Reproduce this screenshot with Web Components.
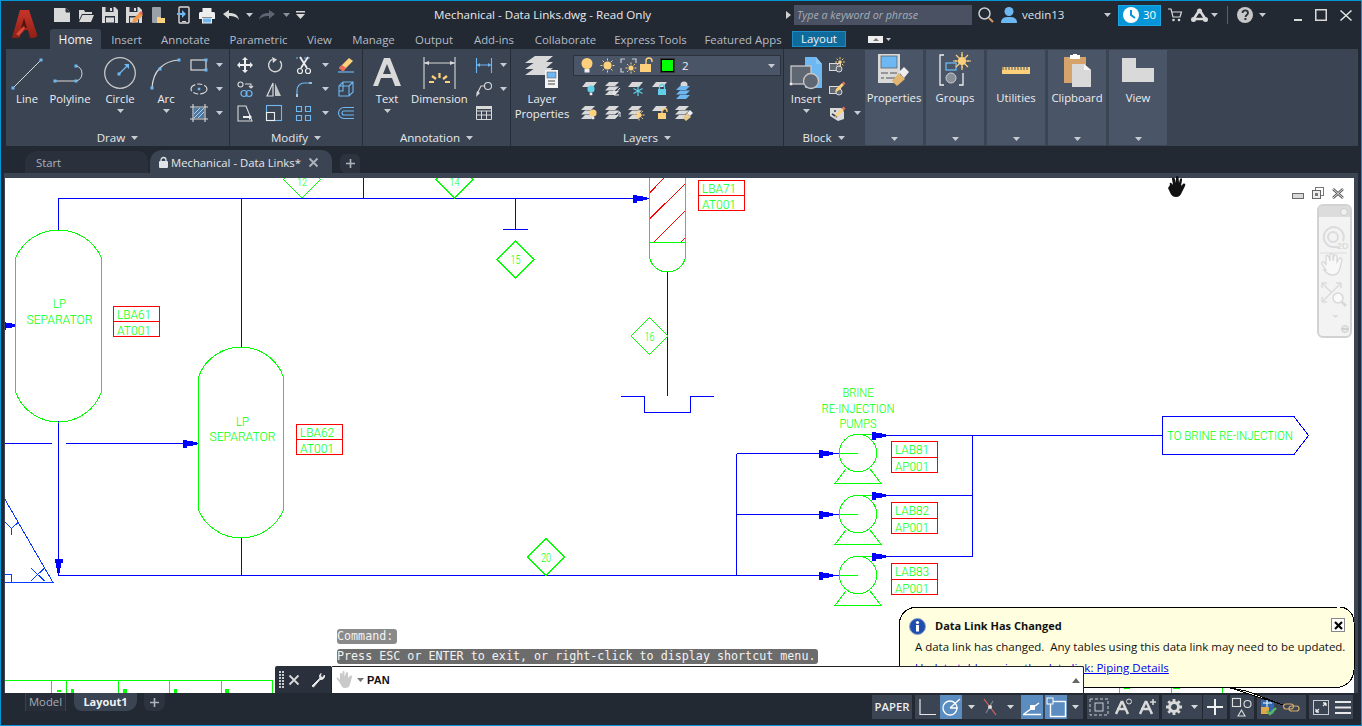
<!DOCTYPE html>
<html lang="en"><head><meta charset="utf-8"><title>Mechanical - Data Links</title>
<style>html,body{margin:0;padding:0;background:#222933;overflow:hidden}</style></head>
<body>
<cad-app>
 <cad-titlebar slot="title"></cad-titlebar>
 <cad-tabs slot="tabs"></cad-tabs>
 <cad-ribbon slot="ribbon">
  <cad-panel name="Draw" w="224">
   <cad-tool label="Line" w="42" icon="line"></cad-tool>
   <cad-tool label="Polyline" w="44" icon="polyline"></cad-tool>
   <cad-tool label="Circle" w="56" icon="circle" caret></cad-tool>
   <cad-tool label="Arc" w="36" icon="arc" caret></cad-tool>
   <cad-minis cols="34px" left="2">
    <cad-mini icon="rect" w="26" dd></cad-mini><cad-mini icon="ell" w="26" dd></cad-mini><cad-mini icon="hatch" w="26" dd></cad-mini>
   </cad-minis>
  </cad-panel>
  <cad-panel name="Modify" w="133">
   <cad-minis cols="29px 30px 42px 30px" flowrow>
    <cad-mini icon="move" w="29"></cad-mini><cad-mini icon="rot" w="30"></cad-mini><cad-mini icon="trim" w="29" dd></cad-mini><cad-mini icon="erase" w="30"></cad-mini>
    <cad-mini icon="copy" w="29"></cad-mini><cad-mini icon="mirror" w="30"></cad-mini><cad-mini icon="fillet" w="29" dd></cad-mini><cad-mini icon="cube" w="30"></cad-mini>
    <cad-mini icon="stretch" w="29"></cad-mini><cad-mini icon="scale" w="30"></cad-mini><cad-mini icon="array" w="29" dd></cad-mini><cad-mini icon="offset" w="30"></cad-mini>
   </cad-minis>
  </cad-panel>
  <cad-panel name="Annotation" w="148">
   <cad-tool label="Text" w="48" icon="bigA" caret></cad-tool>
   <cad-tool label="Dimension" w="56" icon="dim"></cad-tool>
   <cad-minis cols="42px">
    <cad-mini icon="lindim" w="33" dd gap="0"></cad-mini><cad-mini icon="leader" w="33" dd gap="0"></cad-mini><cad-mini icon="table" w="33"></cad-mini>
   </cad-minis>
  </cad-panel>
  <cad-panel name="Layers" w="273">
   <cad-tool label="Layer Properties" w="62" icon="layerprops"></cad-tool>
   <cad-layers></cad-layers>
  </cad-panel>
  <cad-panel name="Block" w="79" end>
   <cad-tool label="Insert" w="44" icon="insert" caret></cad-tool>
   <cad-minis cols="34px">
    <cad-mini icon="bcreate" w="18"></cad-mini><cad-mini icon="bedit" w="18"></cad-mini><cad-mini icon="battr" w="18" dd gap="8"></cad-mini>
   </cad-minis>
  </cad-panel>
  <cad-slate label="Properties" icon="props" gap="2"></cad-slate>
  <cad-slate label="Groups" icon="groups" gap="3"></cad-slate>
  <cad-slate label="Utilities" icon="ruler" gap="3"></cad-slate>
  <cad-slate label="Clipboard" icon="clip" gap="3"></cad-slate>
  <cad-slate label="View" icon="viewic" gap="3"></cad-slate>
 </cad-ribbon>
 <cad-doctabs slot="docs"></cad-doctabs>
 <cad-viewport slot="view">
  <cad-drawing></cad-drawing>
  <cad-hand slot="over"></cad-hand>
  <cad-vpctl slot="over"></cad-vpctl>
  <cad-nav slot="over"></cad-nav>
  <cad-history slot="over"></cad-history>
  <cad-balloon slot="over"></cad-balloon>
  <cad-command slot="over"></cad-command>
 </cad-viewport>
 <cad-status slot="status"></cad-status>
</cad-app>
<script>
const g='#d9d9d9',b='#6db8f2',y='#fdd17b',bd='#5aa5e6';
const S=(w,h,body)=>`<svg width="${w}" height="${h}" viewBox="0 0 ${w} ${h}" style="display:block;flex:none;overflow:visible" aria-hidden="true">${body}</svg>`;
const sq=(x,y,s=3,c=b)=>`<rect x="${x-s/2}" y="${y-s/2}" width="${s}" height="${s}" fill="${c}"/>`;
const tri=(c='#c8ccd2',w=7,h=4)=>S(w,h,`<path d="M0 0H${w}L${w/2} ${h}z" fill="${c}"/>`);
const plane=(x,y)=>`<path d="M${x+4} ${y}h11l-4 5H${x}z" fill="${g}"/>`;
const stack=(x,y,c=g)=>`<path d="M${x+4} ${y}h10l-4 4H${x}z M${x+4} ${y+4.5}h10l-4 4H${x}z M${x+4} ${y+9}h10l-4 4H${x}z" fill="${c}"/>`;
const bulb=(x,yy,c)=>`<circle cx="${x}" cy="${yy}" r="3.6" fill="${c}"/><rect x="${x-1.3}" y="${yy+3.6}" width="2.6" height="2.6" fill="#eee"/>`;
const sun=(x,yy,r=3,c='#fdd17b')=>{let s=`<circle cx="${x}" cy="${yy}" r="${r}" fill="${c}"/>`;for(let i=0;i<8;i++){const a=i*Math.PI/4;s+=`<line x1="${x+Math.cos(a)*(r+1)}" y1="${yy+Math.sin(a)*(r+1)}" x2="${x+Math.cos(a)*(r+3)}" y2="${yy+Math.sin(a)*(r+3)}" stroke="${c}" stroke-width="1"/>`}return s};
const lock=(x,yy,c,open)=>`<rect x="${x}" y="${yy+4}" width="8" height="6" fill="${c}"/><path d="M${x+(open?4:1.5)} ${yy+4}V${yy+2}a2.5 2.5 0 0 1 5 0${open?'v1':'V'+(yy+4)}" fill="none" stroke="${c}" stroke-width="1.3"/>`;
const floppy=`<path d="M0 0h13l3 3v13H0z" fill="${g}"/><rect x="3.5" y="0" width="8" height="5" fill="#2a313d"/><rect x="8" y="1" width="2" height="3" fill="${g}"/><rect x="3" y="9" width="10" height="7" fill="#2a313d"/><rect x="4" y="10.5" width="8" height="5" fill="${g}"/>`;
const I={
 logo:S(26,29,`<defs><linearGradient id="lg" x1="0" y1="0" x2="0" y2="1"><stop offset="0" stop-color="#c9342a"/><stop offset="1" stop-color="#8e1f16"/></linearGradient></defs><path d="M8 0h9l8.500 26-3.500 2h-4l-2-8h-3l-5 5 .5 2-4 1H0z" fill="url(#lg)"/><path d="M12 8l3 10h-6z" fill="#54150f"/><path d="M4 24l8-8 1 2-6 8z" fill="#d8493a"/>`),
 new:S(16,14,`<path d="M0 0h12l4 4v10H0z" fill="${g}"/><path d="M12 0v4h4" fill="#2a313d" stroke="#2a313d"/>`),
 open:S(16,13,`<path d="M1 1h5l1 2h7v2H4L1 11z" fill="${g}"/><path d="M4.500 6H16l-3 7H1z" fill="${g}"/>`),
 save:S(16,16,floppy),
 saveas:S(17,16,floppy+`<path d="M7 12l7-7 3 3-7 7-4 1z" fill="#f09a4a"/><path d="M13 6l2-2 2 2-2 2z" fill="#ef6b5b"/>`),
 web1:S(13,16,`<rect width="9" height="16" rx="1" fill="#9aa0a8"/><path d="M5 10h3l1 1h4v5H5z" fill="${y}"/>`),
 web2:S(12,16,`<rect x="2" width="10" height="16" rx="1" fill="none" stroke="${g}" stroke-width="1.400"/><rect x="5" y="14" width="4" height="1" fill="${g}"/><path d="M0 6h5V3l4 4-4 4V8H0z" fill="${b}"/>`),
 print:S(16,15,`<rect x="3.500" y="0" width="9" height="4" fill="#eee"/><path d="M1 4h14l1 1v6h-3v-2H3v2H0V5z" fill="#eee"/><rect x="3.500" y="10" width="9" height="5" fill="${b}" stroke="#eee"/>`),
 undo:S(16,10,`<path d="M0 4 6 0v3c5 0 9 1 10 7-2-3-5-4-10-4v3z" fill="${g}"/>`),
 redo:S(16,10,`<path d="M16 4 10 0v3c-5 0-9 1-10 7 2-3 5-4 10-4v3z" fill="#5d6672"/>`),
 menu:S(9,8,`<rect width="9" height="1.500" fill="${g}"/><path d="M0 3h9L4.500 8z" fill="${g}"/>`),
 search:S(16,16,`<circle cx="6.500" cy="6.500" r="5.500" fill="none" stroke="#c9ccd1" stroke-width="1.500"/><path d="M11 11l4 4" stroke="#d79a62" stroke-width="2"/>`),
 user:S(16,16,`<circle cx="8" cy="4.500" r="4.500" fill="${b}"/><path d="M0 16c0-5 3-6 8-6s8 1 8 6z" fill="${b}"/>`),
 clock:S(16,16,`<circle cx="8" cy="8" r="8" fill="#fff"/><path d="M8 3v5l4 3" fill="none" stroke="#0696d7" stroke-width="2"/>`),
 cart:S(14,14,`<path d="M0 1h3l2 8h7l1.500-5H4" fill="none" stroke="${g}" stroke-width="1.200"/><circle cx="5.500" cy="12" r="1.300" fill="${g}"/><circle cx="11" cy="12" r="1.300" fill="${g}"/>`),
 a360:S(17,14,`<path d="M8.500 2L2 12M8.500 2L15 12M3 11h11" stroke="${g}" stroke-width="2.500" fill="none"/><circle cx="8.500" cy="3" r="2.500" fill="${g}"/><circle cx="2.500" cy="11.500" r="2.500" fill="${g}"/><circle cx="14.500" cy="11.500" r="2.500" fill="${g}"/>`),
 help:`<svg width="16" height="16" viewBox="0 0 16 16" style="display:block"><circle cx="8" cy="8" r="8" fill="#c8c8c8"/><path d="M5.500 6c0-3.500 5.500-3.500 5.500 0 0 2-2.500 2-2.500 4" fill="none" stroke="#2a313d" stroke-width="1.800"/><rect x="7.400" y="11" width="2" height="2" fill="#2a313d"/></svg>`,
 line:S(32,32,`<line x1="2" y1="31" x2="30" y2="3" stroke="${g}"/>`+sq(2,31)+sq(30,3)),
 polyline:S(32,32,`<path d="M1 24H22A7.700 7.700 0 0 0 22 9" fill="none" stroke="${g}"/>`+sq(1,24)+sq(22,24)+sq(22,9)),
 circle:S(32,32,`<circle cx="16" cy="16" r="15.300" fill="none" stroke="#c8c8c8" stroke-width="1.300"/><path d="M15 17L24 8" stroke="${b}" stroke-width="1.300"/><path d="M20 7h5v5z" fill="${b}"/>`+sq(15,17,3)),
 arc:S(32,32,`<path d="M2 31C3 14 13 4 29 3" fill="none" stroke="${g}" stroke-width="1.200"/>`+sq(2,31)+sq(10,12)+sq(29,3)),
 rect:S(18,14,`<rect x="1" y="2" width="15" height="10" fill="none" stroke="${g}" stroke-width="1.200"/>`+sq(16,2)+sq(16,12)),
 ell:S(18,12,`<ellipse cx="9" cy="6" rx="8" ry="5" fill="none" stroke="${g}" stroke-width="1.200" stroke-dasharray="9 2 5 2"/>`+sq(9,6,2.500)),
 hatch:S(18,18,`<path d="M3 0v18M15 0v18M0 3h18M0 15h18" stroke="${g}" stroke-width="1.100"/><rect x="4" y="4" width="10" height="10" fill="${bd}" opacity=".55"/><path d="M4 10l6-6M4 14l10-10M8 14l6-6" stroke="#cde5fa" stroke-width=".8"/>`),
 move:S(16,16,`<path d="M8 0l3 3H9v4h4V5l3 3-3 3V9H9v4h2l-3 3-3-3h2V9H3v2L0 8l3-3v2h4V3H5z" fill="#f0f0f0"/>`),
 rot:S(16,16,`<path d="M6 2.500A6.500 6.500 0 1 0 14 4" fill="none" stroke="${g}" stroke-width="1.400"/><path d="M6 0l5 2.500L7 6z" fill="${g}"/>`),
 trim:S(16,17,`<path d="M0 1h16" stroke="${b}" stroke-dasharray="2 2" stroke-width="1.200"/><path d="M4 0l7 11M12 0L5 11" stroke="#eee" stroke-width="1.800"/><circle cx="4" cy="14" r="2.500" fill="none" stroke="#eee" stroke-width="1.200"/><circle cx="12" cy="14" r="2.500" fill="none" stroke="#eee" stroke-width="1.200"/>`),
 erase:S(16,16,`<path d="M0 15h16" stroke="${b}" stroke-width="1.200"/><path d="M1 11l10-10 4 3-9 9H4z" fill="${y}"/><path d="M1 11l3-3 4 3-2 3H4z" fill="#ef6b5b"/>`),
 copy:S(16,16,`<circle cx="3.500" cy="3.500" r="2.500" fill="none" stroke="${g}" stroke-width="1.100"/><path d="M8 3h6v3M12 5l2 2 2-2" fill="none" stroke="${g}" stroke-width="1.100"/><circle cx="7" cy="12.500" r="3" fill="none" stroke="${b}" stroke-width="1.200"/><circle cx="12" cy="12.500" r="3" fill="none" stroke="${b}" stroke-width="1.200"/>`),
 mirror:S(15,15,`<path d="M6 1v13H0z" fill="none" stroke="${g}" stroke-width="1.200"/><path d="M8 1v13h6z" fill="${g}" opacity=".85"/>`),
 fillet:S(16,16,`<path d="M1 16V9a7 7 0 0 1 7-7h8" fill="none" stroke="${b}" stroke-width="1.200"/><path d="M1 16v-3M13 2h3" stroke="#eee" stroke-width="1.200"/>`),
 cube:S(16,16,`<path d="M5 1h10v10l-4 4H1V5zM1 5h10v10M11 5l4-4M5 1v9H1" fill="none" stroke="${b}" stroke-width="1.100"/>`),
 stretch:S(16,16,`<path d="M1 1h8l6 15H1z" fill="none" stroke="${g}" stroke-width="1.100"/><path d="M6 11h6V9l3 3-3 3v-2H6z" fill="#eee"/>`),
 scale:S(16,16,`<rect x=".5" y=".5" width="15" height="15" fill="none" stroke="${b}" stroke-width="1.100"/><rect x=".5" y="7.500" width="8" height="8" fill="none" stroke="#eee" stroke-width="1.100"/>`),
 array:S(15,15,`<path d="M.5.5h5v5h-5zM9.500.5h5v5h-5zM.5 9.500h5v5h-5zM9.500 9.500h5v5h-5z" fill="none" stroke="${b}" stroke-width="1.100"/>`),
 offset:S(16,12,`<path d="M16 .5H6a5.500 5.500 0 0 0 0 11h10M16 4H6a2 2 0 0 0 0 4h10" fill="none" stroke="${b}" stroke-width="1.100"/>`),
 bigA:S(28,30,`<path d="M11 0h6l11 28h-6l-3-8H8l-3 8H0zM14 6l-4 10h8z" fill="${g}" fill-rule="evenodd"/>`),
 dim:S(33,32,`<path d="M1 0v32M32 0v32" stroke="${g}" stroke-width="1.100"/><path d="M1 6h31" stroke="${g}"/><path d="M1 6l5-2v4zM32 6l-5-2v4z" fill="${g}"/><g stroke="${y}" stroke-width="2.200"><path d="M16.500 16v5M9 19l4 3M24 19l-4 3M6 25h5M27 25h-5"/></g>`),
 lindim:S(16,15,`<path d="M.5 0v15M15.500 0v15M1 7h14" stroke="${b}" stroke-width="1.100"/><path d="M1 7l3-2v4zM15 7l-3-2v4z" fill="${b}"/>`),
 leader:S(16,15,`<circle cx="12" cy="4" r="3.500" fill="none" stroke="${g}" stroke-width="1.100"/><path d="M8.500 4H5L1 12" fill="none" stroke="${g}" stroke-width="1.100"/><path d="M0 15l1-6 3 2z" fill="${g}"/>`),
 table:S(16,14,`<path d="M.5.5h15v13H.5zM.5 5h15M.5 9h15M5.500 5v8.500M10.500 5v8.500" fill="none" stroke="${g}" stroke-width="1"/><rect x="0" y="0" width="16" height="3" fill="${g}"/>`),
 layerprops:S(34,34,`<path d="M10 0h18l-8 7H0z M10 6h18l-8 7H0z M10 12h18l-8 7H0z" fill="${g}"/><rect x="20" y="14" width="13" height="18" fill="#f4f4f4"/><rect x="22" y="16" width="9" height="6" fill="${b}" stroke="#555" stroke-width=".5"/><path d="M23 25h7M30 28h-7" stroke="#444"/>`),
 insert:S(32,32,`<path d="M15 0h11l6 7v24H15z" fill="${b}"/><path d="M26 0v7h6" fill="#8ac6f4"/><rect x="1" y="9" width="20" height="18" fill="#5e6772" stroke="#c8c8c8" stroke-width="1.300"/><circle cx="21" cy="24" r="7.500" fill="#5e6772" stroke="#c8c8c8" stroke-width="1.300"/>`+sq(1,27,2.500,'#eee')),
 bcreate:S(16,15,`<rect x=".5" y="5.500" width="11" height="7" fill="#5e6772" stroke="${g}"/><circle cx="10" cy="11" r="3" fill="#5e6772" stroke="${g}"/>`+sun(11,4,1.800)),
 bedit:S(16,16,`<rect x=".5" y="5.500" width="11" height="7" fill="#5e6772" stroke="${g}"/><circle cx="10" cy="11" r="3" fill="#5e6772" stroke="${g}"/><path d="M7 8l6-6 2 2-6 6-3 1z" fill="${y}"/><path d="M13 2l1.500-1.500 2 2L15 4z" fill="#ef6b5b"/>`),
 battr:S(16,16,`<path d="M1 3h11l3 4v7l-6 2-8-5z" fill="${g}"/><path d="M5 6h2M3 9l5 3" stroke="#39424f" stroke-width="1.500"/><path d="M7 9l6-6 2 2-6 6-3 1z" fill="${y}"/><path d="M13 3l1.500-1.500 2 2L15 5z" fill="#ef6b5b"/>`),
 props:S(32,33,`<rect x="0" y="0" width="22" height="29" fill="${g}"/><rect x="3" y="2" width="16" height="12" fill="${b}" stroke="#555" stroke-width=".7"/><path d="M3 19h7M12 19h7M3 24h3M8 24h11" stroke="#555"/><path d="M14 27l7-8 6 6-8 7z" fill="#e3b56e"/><path d="M21 18l5-5 5 5-5 6z" fill="#eee"/>`),
 groups:S(32,32,`<path d="M5 1H1v30h4M20 31h4V19" fill="none" stroke="#eee" stroke-width="1.300"/><rect x="7" y="9" width="10" height="7" fill="none" stroke="${b}" stroke-width="1.300"/><circle cx="12" cy="24" r="5" fill="#8a9099" stroke="#ccc"/><g transform="translate(-2 -3)">${sun(25,10,4,y)}<path d="M25 1v18M16 10h18M19 4l12 12M31 4L19 16" stroke="${y}" stroke-width="1.200"/></g>`),
 ruler:S(28,7,`<rect width="28" height="7" y="0" fill="${y}"/><path d="M1 0v3M4 0v3M7 0v3M10 0v3M13 0v3M16 0v3M19 0v3M22 0v3M25 0v3" stroke="#4a5568"/>`),
 clip:S(27,32,`<rect x="0" y="3" width="22" height="26" fill="#d6a36b"/><rect x="6" y="1" width="10" height="4" fill="#fff"/><rect x="9" y="0" width="4" height="3" fill="#fff"/><path d="M8 10h12l7 6v17H8z" fill="${g}"/><path d="M20 10v6h7" fill="#f5f5f5"/>`),
 viewic:S(32,24,`<path d="M0 0h14v10h18v14H0z" fill="${g}"/>`),
};
const def=(n,c)=>customElements.define(n,c);
class Base extends HTMLElement{constructor(){super();this.attachShadow({mode:'open'})}connectedCallback(){if(!this.done){this.done=1;this.shadowRoot.innerHTML=this.html()}}}
const FONT=`"Open Sans","Noto Sans","Liberation Sans",sans-serif`;

def('cad-app',class extends Base{html(){return `<style>:host{display:flex;flex-direction:column;box-sizing:border-box;width:1362px;height:726px;background:#222933;border:1px solid #0696d7;font:11.300px/14px ${FONT};color:#e6e8ea;overflow:hidden}</style>
<slot name="title"></slot><slot name="tabs"></slot><slot name="ribbon"></slot><slot name="docs"></slot><slot name="view"></slot><slot name="status"></slot>`}});

def('cad-titlebar',class extends Base{html(){
 const it=(ml,s,st='')=>`<span style="margin-left:${ml}px;flex:none;${st}">${s}</span>`;
 return `<style>:host{display:flex;align-items:center;height:28px;flex:none}
 .t{font-size:11.600px;color:#e8eaec;white-space:nowrap;width:341px;flex:none}
 .s{margin-left:3px;width:178px;height:20px;flex:none;background:#495163;color:#a7adb6;font-style:italic;font-size:10.700px;line-height:20px;padding-left:3px;box-sizing:border-box;white-space:nowrap}
 .u{margin-left:5px;width:81px;flex:none;font-size:11.500px;color:#dfe3e6}
 .c{margin-left:7px;width:43px;height:21px;flex:none;box-sizing:border-box;background:#0696d7;border:1px solid #1aa5e5;display:flex;align-items:center;padding-left:4px;gap:4px;color:#fff;font-size:11.500px}
 span{display:block}</style>
 ${it(11,I.logo,'align-self:flex-start;margin-top:9px;height:0')}
 ${it(16,I.new)}${it(8,I.open)}${it(8,I.save)}${it(8,I.saveas)}${it(9,I.web1)}${it(12,I.web2)}${it(10,I.print)}${it(8,I.undo)}${it(7,tri())}${it(6,I.redo)}${it(8,tri('#8a919b'))}${it(6,I.menu)}
 <span class="t" style="margin-left:129px">Mechanical - Data Links.dwg - Read Only</span>
 ${it(11,S(5,8,`<path d="M0 0l5 4-5 4z" fill="#d0d0d0"/>`))}
 <div class="s">Type a keyword or phrase</div>
 ${it(6,I.search)}${it(7,I.user)}
 <span class="u">vedin13</span>${it(1,tri())}
 <div class="c">${I.clock}<span>30</span></div>
 ${it(7,I.cart)}${it(9,I.a360)}${it(3,tri())}
 ${it(9,`<div style="width:1px;height:18px;background:#59616d"></div>`)}${it(9,I.help)}${it(6,tri())}
 ${it(28,S(8,2,`<rect width="8" height="2" fill="#d9d9d9"/>`),'margin-top:10px')}
 ${it(13,S(12,12,`<rect x=".75" y=".75" width="10.500" height="10.500" fill="none" stroke="#d9d9d9" stroke-width="1.500"/>`))}
 ${it(13,S(12,11,`<path d="M.5.5l11 10M11.500.5l-11 10" stroke="#e6e6e6" stroke-width="1.500"/>`))}`}});

def('cad-tabs',class extends Base{html(){
 const t=[['Home',51,1],['Insert',51],['Annotate',67],['Parametric',79],['View',43],['Manage',65],['Output',56],['Add-ins',64],['Collaborate',79],['Express Tools',91],['Featured Apps',94]];
 return `<style>:host{display:flex;height:20px;flex:none;padding-left:49px;align-items:flex-start}
 div{text-align:center;line-height:18px;padding-top:2px;height:18px;color:#b4bcc6;white-space:nowrap;font-size:11.400px;flex:none}
 .a{background:#3b4453;color:#f2f4f6;border-radius:3px 3px 0 0;font-size:12px}
 .l{margin-left:2px;margin-top:2px;width:54px;height:16px;box-sizing:border-box;line-height:14px;padding:0;background:#0f6b9c;border:1px solid #1c8cc6;color:#f2f4f6}
 .b{margin-left:22px;margin-top:7px;width:15px;height:7px;padding:0;background:#eee;display:flex;align-items:center;justify-content:center}
 .d{margin-left:3px;margin-top:9px;padding:0;height:auto}</style>
 ${t.map(x=>`<div class="${x[2]?'a':''}" style="width:${x[1]}px">${x[0]}</div>`).join('')}
 <div class="l">Layout</div><div class="b">${S(6,3,`<path d="M0 3h6L3 0z" fill="#777"/>`)}</div><div class="d">${tri('#c8ccd2',5,3)}</div>`}});

def('cad-ribbon',class extends Base{html(){return `<style>:host{display:flex;height:97px;flex:none;margin-left:5px;margin-right:3px;background:#3b4453}</style><slot></slot>`}});

def('cad-panel',class extends Base{html(){const w=this.getAttribute('w');return `<style>:host{display:flex;flex-direction:column;flex:none;box-sizing:border-box;width:${w}px;height:97px;${this.hasAttribute('end')?'':'border-right:1px solid #262d38;'}}
 .c{display:flex;height:80px;padding-top:4px;box-sizing:border-box}
 .n{height:17px;line-height:15px;display:flex;align-items:center;justify-content:center;gap:6px;color:#e6e8ea;font-size:11.600px}</style>
 <div class="c"><slot></slot></div><div class="n"><span>${this.getAttribute('name')}</span>${tri()}</div>`}});

def('cad-tool',class extends Base{html(){const a=k=>this.getAttribute(k);return `<style>:host{display:flex;flex-direction:column;align-items:center;width:${a('w')}px;flex:none;color:#eceef0;font-size:11.300px;line-height:15px;text-align:center}
 .i{height:39px;display:flex;align-items:center;justify-content:center}
 .l{white-space:normal;width:100%;margin-top:-1px}.c{margin-top:3px}</style>
 <div class="i">${I[a('icon')]}</div><div class="l">${a('label').replace(' ','<br>')}</div>${this.hasAttribute('caret')?`<div class="c">${tri('#c8ccd2')}</div>`:''}`}});

def('cad-minis',class extends Base{html(){const a=k=>this.getAttribute(k);return `<style>:host{display:grid;grid-template-columns:${a('cols')};grid-auto-rows:24px;align-items:center;flex:none;margin-left:${a('left')||0}px}</style><slot></slot>`}});

def('cad-mini',class extends Base{html(){const a=k=>this.getAttribute(k);return `<style>:host{display:flex;align-items:center}.i{width:${a('w')}px;display:flex;justify-content:center;flex:none}.d{margin-left:${a('gap')||4}px}</style>
 <div class="i">${I[a('icon')]}</div>${this.hasAttribute('dd')?`<div class="d">${tri()}</div>`:''}`}});

def('cad-layers',class extends Base{html(){
 const r1=[S(16,15,plane(0,0)+bulb(9,7,'#5fd0e8')),S(16,15,stack(0,0)+`<path d="M15 6L9 13M9 8v5h5" fill="none" stroke="#eee"/>`),S(17,15,plane(0,0)+`<g stroke="#5fd0e8" stroke-width="1.200"><path d="M10 4v10M5.500 6.500l9 5M14.500 6.500l-9 5"/></g>`),S(17,15,plane(0,0)+lock(6,3,'#5fd0e8')),S(16,16,`<circle cx="8" cy="4" r="3.500" fill="${g}"/>`+stack(0,5,b))];
 const r2=[S(17,15,stack(0,0)+bulb(12,7,y)),S(16,15,stack(0,0)+`<path d="M9 13l6-7M10 6h5v5" fill="none" stroke="#eee"/>`),S(17,15,stack(0,0)+sun(11,9,2.500)),S(17,15,plane(0,0)+lock(6,3,y,1)),S(17,15,stack(0,0)+`<path d="M8 12l4-5 4 4-5 4z" fill="#e9c98a"/><path d="M12 7l3-3 3 3-3 3z" fill="#eee"/>`)];
 return `<style>:host{display:block;flex:none;width:209px}
 .dd{margin-top:2px;height:21px;width:208px;box-sizing:border-box;background:#4a5568;border:1px solid #2b323d;display:flex;align-items:center;padding-left:6px}
 .dd span{font-size:11.500px;margin-left:5px;color:#eee;flex:1}
 .g{display:grid;grid-template-columns:repeat(5,23.500px);grid-auto-rows:24px;margin-left:5px;margin-top:1px;align-items:center;justify-items:center}</style>
 <div class="dd">${S(14,15,`<circle cx="7" cy="5.500" r="5.500" fill="${y}"/><rect x="4.500" y="11" width="5" height="3.500" fill="#eee"/>`)}<div style="width:6px"></div>${S(15,15,sun(7.500,7.500,4))}<div style="width:5px"></div>${S(17,15,`<path d="M5 1H1v4M12 1h4v4M1 10v4h3" fill="none" stroke="#ccc" stroke-width="1.200"/>`+sun(11,10,2.500))}<div style="width:3px"></div>${S(14,15,`<rect x="0" y="6" width="11" height="8" fill="${y}"/><path d="M6 6V3a3 3 0 0 1 6 0v1" fill="none" stroke="${y}" stroke-width="1.400"/>`)}<div style="width:6px"></div><div style="width:11px;height:11px;background:#0f0;border:1px solid #000;flex:none;margin:0 3px 0 1px;outline:1px solid #333"></div><span>2</span><div style="margin-right:5px">${tri()}</div></div>
 <div class="g">${r1.concat(r2).map(s=>`<div>${s}</div>`).join('')}</div>`}});

def('cad-slate',class extends Base{html(){const a=k=>this.getAttribute(k);return `<style>:host{display:flex;flex-direction:column;align-items:center;flex:none;box-sizing:border-box;width:58px;height:95px;margin:1px 0 1px ${a('gap')}px;background:#4a5568;color:#eceef0;font-size:11.300px;line-height:15px}
 .i{height:40px;display:flex;align-items:center;justify-content:center;margin-top:0}.l{margin-top:0;white-space:nowrap}.c{margin-top:auto;margin-bottom:4px}</style>
 <div class="i">${I[a('icon')]}</div><div class="l">${a('label')}</div><div class="c">${tri('#c8ccd2')}</div>`}});

def('cad-doctabs',class extends Base{html(){return `<style>:host{display:flex;height:27px;flex:none;align-items:flex-end;padding-left:24px;color:#aeb6c0;font-size:11.300px;box-sizing:border-box}
 .s{width:123px;height:22px;background:#2a313d;border-radius:12px 10px 0 0;line-height:24px;padding-left:11px;box-sizing:border-box;color:#aab2bc;flex:none}
 .m{margin-left:2px;width:182px;height:23px;background:#3b4453;border-radius:12px 10px 0 0;display:flex;align-items:center;padding:2px 0 0 9px;box-sizing:border-box;color:#e6e8ea;gap:3px;flex:none}
 .x{margin-left:5px;color:#aab;display:block}
 .p{margin-left:8px;width:20px;height:19px;background:#2d3440;border-radius:6px 6px 0 6px;display:flex;align-items:center;justify-content:center;flex:none}</style>
 <div class="s">Start</div>
 <div class="m">${S(9,11,`<rect y="4" width="9" height="7" rx="1" fill="#dfe2e6"/><path d="M2 4.500V3a2.500 2.500 0 0 1 5 0v1.500" fill="none" stroke="#dfe2e6" stroke-width="1.300"/>`)}<span>Mechanical - Data Links*</span><span class="x">${S(9,9,`<path d="M.5.5l8 8M8.500.5l-8 8" stroke="#aeb4bc" stroke-width="1.800"/>`)}</span></div>
 <div class="p">${S(9,9,`<path d="M4.500 0v9M0 4.500h9" stroke="#aeb4bc" stroke-width="1.600"/>`)}</div>`}});

def('cad-viewport',class extends Base{html(){return `<style>:host{display:block;position:relative;z-index:3;flex:none;height:520px;margin:0 3px;background:#3b4453}
 .w{position:absolute;left:1px;right:4px;top:5px;bottom:0;background:#fff;overflow:hidden}</style>
 <div class="w"><slot></slot></div><slot name="over"></slot>`}});

def('cad-drawing',class extends Base{html(){
 const G='#00ff00',B='#0000ff',R='#ff0000';
 let s='';
 const path=(d,c,ex='')=>s+=`<path d="${d}" fill="none" stroke="${c}" ${ex}/>`;
 const txt=(x,yy,t,len,anchor='start',sz=12.5)=>s+=`<text x="${x}" y="${yy}" fill="${G}" font-family="Roboto,Liberation Sans" font-weight="300" font-size="${sz}" text-anchor="${anchor}" textLength="${len}" lengthAdjust="spacingAndGlyphs">${t}</text>`;
 const rect=(x,y,w,h,c)=>s+=`<rect x="${x}" y="${y}" width="${w}" height="${h}" fill="${c}"/>`;
 const ar=(x,y)=>{rect(x,y-4,4,8,B);rect(x+4,y-2.5,6,5,B);rect(x+10,y-1.5,4,3,B)};
 const ad=(x,y)=>{rect(x-4,y,8,4,B);rect(x-2.5,y+4,5,5,B);rect(x-1.5,y+9,3,5,B)};
 const tag=(x,y,h,a,c)=>{const m=Math.round(h/2);s+=`<path d="M${x+.5} ${y+.5}h46v${h}h-46zM${x+.5} ${y+.5+m-0}h46" fill="none" stroke="${R}" stroke-width="1.300"/>`;txt(x+4,y+13,a,34);txt(x+4,y+m+14,c,34)};
 const dia=(cx,cy,t,base,sz=13)=>{path(`M${cx} ${cy-18.500}L${cx+18.500} ${cy}L${cx} ${cy+18.500}L${cx-18.500} ${cy}Z`,G);txt(cx,base,t,10,'middle',sz)};
 const rad=(c,sg)=>(c*c/4+sg*sg)/(2*sg);
 const vessel=(l,r,a,bb,st,sb)=>path(`M${l} ${a}A${rad(r-l,st)} ${rad(r-l,st)} 0 0 1 ${r} ${a}V${bb}A${rad(r-l,sb)} ${rad(r-l,sb)} 0 0 1 ${l} ${bb}Z`,G);
 const pump=(cy)=>{const cx=858;s+=`<circle cx="${cx}" cy="${cy}" r="18.700" fill="none" stroke="${G}"/>`;path(`M839 ${cy+.5}H${cx}M${cx-12} ${cy+16}L${cx-23} ${cy+30.500}H${cx+23}L${cx+12} ${cy+16}M853 ${cy-18.500}H872`,G)};
 path('M58.500 231V198.500H649M241.500 198.500V347M363.500 178V198.500M515.500 198.500V229.500M503 229.500H528',B);
 path('M5 443.500H52M66 443.500H198M58.500 421V575.500H833M241.500 538V575.500M5 325.500H15.500',B);
 path('M667.500 272V396M621 396.500H644.500V412.500H690.500V396.500H714',B);
 path('M736.500 453.500V575.500M736.500 453.500H839M736.500 514.500H839M833 575.500H839',B);
 path('M872 435.500H1162M972.500 435.500V556.500H872M972.500 495.500H872',B);
 ar(633,198.500);ar(183,443.500);ar(2,325.500);ad(58.500,559);
 [453.500,514.500,575.500].forEach(v=>ar(819,v));[435.500,495.500,556.500].forEach(v=>ar(872,v));
 path('M1162.500 416.500H1294L1308.500 435.500L1294 454.500H1162.500Z',B);
 vessel(15.500,101.500,258,392,28,30);vessel(198.500,283.500,377,510,30,28);
 txt(59.500,308,'LP',13,'middle');txt(59.500,323.500,'SEPARATOR',66,'middle');
 txt(242.500,426,'LP',13,'middle');txt(242.500,441,'SEPARATOR',66,'middle');
 tag(113,306,30,'LBA61','AT001');tag(296,424,30,'LBA62','AT001');tag(698,180,30,'LBA71','AT001');
 tag(891,441,31,'LAB81','AP001');tag(891,502,31,'LAB82','AP001');tag(891,563,31,'LAB83','AP001');
 dia(515.500,259.500,'15',264);dia(649.500,336,'16',341);dia(546,557,'20',562);dia(302,179.500,'12',186,10);dia(454.500,179.500,'14',186,10);
 path('M649.500 178V257A18.300 18.300 0 0 0 685.500 257V178M649.500 242.500H685.500',G);
 path('M650 192.500L664 178M650 218.500L685 184M654 242L685 211M681 242L685 238',R);
 pump(453);pump(514);pump(575);
 txt(858,397,'BRINE',31,'middle');txt(858,412.500,'RE-INJECTION',73,'middle');txt(858,428,'PUMPS',37,'middle');
 txt(1167,440,'TO BRINE RE-INJECTION',126);
 path('M5 499.500L53 582.500H5M5 574.500H11.500V582.500M31 568L44.500 581M31 581L44.500 568M5 522L11.500 528.500L18.500 522M11.500 528.500V535','#0a3cff');
 path('M5 680.500H273M51.500 680.500V693M66.500 680.500V693M118.500 680.500V693M169.500 680.500V693M221.500 680.500V693M272.500 680.500V693M1119.500 688V693M1171.500 688V693M1222.500 688V693M1124 688H1130M1173 688H1180',G);
 [[57,690,4,2],[71,689,3,4],[123,689,4,4],[174,689,3,4],[225,689,4,4]].forEach(a=>rect(a[0],a[1],a[2],a[3],G));
 return `<style>:host{display:block;width:1349px;height:515px}svg{display:block}</style><svg width="1349" height="515" viewBox="5 178 1349 515" shape-rendering="crispEdges">${s}</svg>`}});

def('cad-hand',class extends Base{html(){return `<style>:host{position:absolute;left:1162px;top:3px;display:block}</style>${S(22,22,`<path d="M4 9c-1-3 1-3 3 0L6 3c0-2 2-2 3 0l1 4V1c0-1.500 2-1.500 2.500 0l.5 6 1-4c.5-1.500 2.500-1 2 1l-1 6 2-2c1.500-1 3 0 2 2l-3 6c-1 3-3 5-6 5-5 0-6-5-8-9z" fill="#111"/>`)}`}});

def('cad-vpctl',class extends Base{html(){return `<style>:host{position:absolute;left:1288px;top:14px;display:flex;gap:8px;align-items:flex-end}</style>
 ${S(12,6,`<rect x=".5" y=".5" width="11" height="5" fill="#d8d8d8" stroke="#6a6a6a"/>`)}
 ${S(12,12,`<rect x="3.500" y=".5" width="8" height="8" fill="none" stroke="#777"/><rect x=".5" y="3.500" width="8" height="8" fill="#eee" stroke="#666"/><rect x="3" y="6" width="3" height="3" fill="#777"/>`)}
 ${S(12,11,`<path d="M1 1l10 9M11 1L1 10" stroke="#555" stroke-width="2.500"/><path d="M1 1l10 9M11 1L1 10" stroke="#e8e8e8" stroke-width="1"/>`)}`}});

def('cad-nav',class extends Base{html(){return `<style>:host{position:absolute;left:1313px;top:31px;display:block;box-sizing:border-box;width:35px;height:134px;border:2px solid #d2d2d2;border-radius:6px;background:#f3f3f3}
 .h{height:11px;background:#dcdcdc;border-radius:3px 3px 0 0}</style>
 <div class="h"></div>
 ${S(31,119,`<circle cx="25" cy="-5" r="3.500" fill="#f0f0f0" stroke="#ccc"/>
 <g fill="none" stroke="#dcdcdc" stroke-width="2"><path d="M24 24A10 10 0 1 0 13 30h8"/><circle cx="14" cy="20" r="5"/></g><text x="18" y="32" fill="#dcdcdc" font-family="Liberation Sans" font-size="9" font-weight="700">2D</text>
 <path d="M1 36H28" stroke="#dcdcdc"/>
 <path d="M7 53l-4-6c-1-2 1-3 3-1l1 2V40c0-2 2-2 3 0l1 4V38c0-2 2-2 3 0v6l1-5c1-2 3-1 3 1v5l2-3c1-2 3-1 3 1l-2 8c-1 4-3 7-7 7-4 0-6-1-9-5z" fill="#f8f8f8" stroke="#d8d8d8" stroke-width="1.300"/>
 <path d="M3 66l10 10 M22 66L3 85M3 66h5M3 66v5M22 66h-5M22 66v5M3 85h5M3 85v-5" stroke="#dcdcdc" stroke-width="1.500" fill="none"/><circle cx="19" cy="81" r="5" fill="#fafafa" stroke="#d8d8d8" stroke-width="1.500"/><path d="M23 85l4 4" stroke="#d8d8d8" stroke-width="2.500"/>
 <path d="M13 98h7l-3.500 3z" fill="#ddd"/>
 <circle cx="26" cy="112" r="3.500" fill="#e8e8e8" stroke="#d0d0d0"/><path d="M23 112h6" stroke="#bbb"/>`)}`}});

def('cad-history',class extends Base{html(){return `<style>:host{position:absolute;left:333px;top:456px;display:flex;flex-direction:column;align-items:flex-start;gap:5px;font:11.700px/15px "DejaVu Sans Mono","Liberation Mono",monospace;color:#f3f3f3}
 div{border-radius:3px;white-space:pre;height:15px}.a{background:#8a8a8a;width:60px}.b{background:#6c6c6c;width:481px}</style>
 <div class="a">Command:</div><div class="b">Press ESC or ENTER to exit, or right-click to display shortcut menu.</div>`}});

def('cad-balloon',class extends Base{html(){return `<style>:host{position:absolute;left:891px;top:434px;display:block;width:460px;height:100px;color:#111;font:11.500px/16px ${FONT}}
 svg.bg{position:absolute;left:0;top:0}
 .c{position:relative;padding:10px 0 0 20px}
 .t{display:flex;align-items:center;font-weight:700;font-size:11px;height:18px}
 .i{width:17px;height:17px;margin-left:-6px;margin-right:9px;flex:none}
 .b{margin-top:2px;white-space:pre;color:#111;font-size:11.480px;line-height:20px}
 a{color:#0000ee;text-decoration:underline;display:block;line-height:21px;font-size:11.480px;white-space:nowrap}
 .x{position:absolute;left:436px;top:11px;width:14px;height:14px;box-sizing:border-box;border:1px solid #888;background:#fff;display:flex;align-items:center;justify-content:center}</style>
 <svg class="bg" width="460" height="110" viewBox="0 0 460 110" shape-rendering="crispEdges"><path d="M20 .5H440A15 15 0 0 1 459 15.500V62A18 18 0 0 1 441 80.500H334L388 98L353 84.500 334 80.500H20A16 16 0 0 1 4.500 64.500V16A16 16 0 0 1 20 .5Z" fill="#ffffdf" stroke="#000"/></svg>
 <div class="c"><div class="t"><span class="i"><svg width="17" height="17" viewBox="0 0 17 17"><circle cx="8.500" cy="8.500" r="8" fill="#1f4fae" stroke="#8ea3c9"/><circle cx="8.500" cy="4.500" r="1.600" fill="#fff"/><rect x="7" y="7" width="3" height="6.500" fill="#fff"/></svg></span><span>Data Link Has Changed</span></div>
 <div class="b">A data link has changed.  Any tables using this data link may need to be updated.</div>
 <a href="#">Update tables using the data link: Piping Details</a></div>
 <div class="x">${S(9,9,`<path d="M1 1l7 7M8 1l-7 7" stroke="#000" stroke-width="2.200"/>`)}</div>`}});

def('cad-command',class extends Base{html(){return `<style>:host{position:absolute;left:271px;top:493px;display:flex;width:809px;height:27px}
 .d{width:56px;background:#2a313d;display:flex;align-items:center;flex:none;padding-left:4px;box-sizing:border-box;gap:5px;border-radius:2px 0 0 0}
 .w{flex:1;background:#fff;border:1px solid #222;border-width:1px 1px 0 1px;display:flex;align-items:center;box-sizing:border-box;padding-left:4px;border-radius:2px 2px 0 0}
 b{font:700 11px/14px "Liberation Sans",sans-serif;color:#111;margin-left:3px;flex:1;letter-spacing:.2px}</style>
 <div class="d">${S(5,18,`<g fill="#c8ccd2"><path d="M0 0h2v2H0zM3 0h2v2H3zM0 3h2v2H0zM3 3h2v2H3zM0 6h2v2H0zM3 6h2v2H3zM0 9h2v2H0zM3 9h2v2H3zM0 12h2v2H0zM3 12h2v2H3zM0 15h2v2H0zM3 15h2v2H3z"/></g>`)}
 ${S(10,10,`<path d="M.5.5l9 9M9.500.5l-9 9" stroke="#d9d9d9" stroke-width="1.800"/>`)}
 <div style="margin-left:7px">${S(14,14,`<path d="M1 13l8-8a3.500 3.500 0 0 1 1-4.500l-.5 3 2 1 2-2.500c.5 3-1.500 5-4.500 4.500l-6.500 7.500z" fill="#e6e6e6" stroke="#e6e6e6"/>`)}</div></div>
 <div class="w">${S(17,18,`<path d="M4 12L1 8c-1-2 1-2 2 0l1 1V3c0-1.500 2-1.500 2 0v3l.5-5c0-1.500 2-1.500 2 0v5L10 2c.3-1.500 2-1 2 .5V7l2-2c1-1 2.500 0 2 1l-2 7c-.7 3-2 4-5 4-2.500 0-3.500-2-5-5z" fill="#c9c9c9"/>`)}<div style="margin-left:4px">${tri('#777')}</div><b>PAN</b><div style="margin-right:3px">${S(8,5,`<path d="M0 5h8L4 0z" fill="#666"/>`)}</div></div>`}});

def('cad-status',class extends Base{html(){
 const bt=(w,s,a)=>`<div class="bt${a?' on':''}" style="width:${w}px">${s}</div>`;
 const dd=w=>bt(w,tri('#d4d7db'));
 const grp=(ml,w,inner)=>`<div class="gr" style="margin-left:${ml}px;width:${w}px">${inner}</div>`;
 const W='#e8e8e8';
 const ortho=S(17,16,`<path d="M1 0V15.500H17" fill="none" stroke="${W}" stroke-width="1.200"/>`);
 const polar=S(18,18,`<circle cx="8" cy="10" r="7" fill="none" stroke="#fff" stroke-width="1.300"/><path d="M8 10L18 1M8 10h8" stroke="#fff" stroke-width="1.300"/>`);
 const os=S(18,18,`<path d="M3 1L15 17" stroke="#e0655a" stroke-width="1.200"/><path d="M12 3L5 15" stroke="#7a8794" stroke-width="1.200"/><circle cx="9" cy="9" r="2" fill="#ddd"/>`);
 const ang=S(18,15,`<path d="M0 14.500H18" stroke="#fff" stroke-width="1.500"/><path d="M1 14L16 3" stroke="#fff" stroke-width="1.500"/><rect x="7" y="5" width="5" height="5" fill="#fff"/>`);
 const sqr=S(19,19,`<rect x="3.500" y="3.500" width="15" height="15" fill="none" stroke="#fff" stroke-width="1.400"/><rect x="0" y="0" width="6" height="6" fill="#5b8dc0" stroke="#fff"/>`);
 const sel=S(20,18,`<rect x="1" y="1" width="18" height="16" fill="none" stroke="#c8ccd2" stroke-dasharray="3 2"/><rect x="6" y="5" width="8" height="8" fill="none" stroke="#c8ccd2"/>`);
 const an=(c)=>S(18,18,`<path d="M8 3L2 16M8 3l6 13M3 11h8" stroke="#d9d9d9" stroke-width="2.500" fill="none"/>${c}`);
 const gear=S(16,16,`<circle cx="8" cy="8" r="4.500" fill="none" stroke="#d9d9d9" stroke-width="3"/><path d="M8 0v3M8 13v3M0 8h3M13 8h3M2.300 2.300l2 2M11.700 11.700l2 2M13.700 2.300l-2 2M4.300 11.700l-2 2" stroke="#d9d9d9" stroke-width="2.800"/>`);
 const plus=S(16,16,`<path d="M8 0v16M0 8h16" stroke="#f0f0f0" stroke-width="2"/>`);
 const shapes=S(20,20,`<rect x=".5" y="1.500" width="8" height="8" fill="none" stroke="#e0e0e0" stroke-width="1.100"/><circle cx="15.500" cy="7" r="3.500" fill="none" stroke="#e0e0e0" stroke-width="1.100"/><path d="M6 19l3.500-6 3.500 6z" fill="none" stroke="#e0e0e0" stroke-width="1.100"/>`);
 const cloud=S(17,17,`<rect x="1" y="1" width="13" height="14" fill="#3068b0"/><path d="M1 8h8v7H1z" fill="#e0a64a"/><path d="M7 0v8M3 4h9" stroke="#fff"/><path d="M7 12l3 3 6-6" fill="none" stroke="#5cb85c" stroke-width="2.300"/>`);
 const link=S(17,9,`<rect x=".5" y="1" width="10" height="5" rx="2.500" fill="none" stroke="#d6a96b" stroke-width="1.200"/><rect x="6" y="3" width="10" height="5" rx="2.500" fill="none" stroke="#d6a96b" stroke-width="1.200"/>`);
 const full=S(16,15,`<rect x=".5" y=".5" width="15" height="14" fill="none" stroke="#c8ccd2"/><path d="M3 12l3-3M3 12v-3M3 12h3M13 3l-3 3M13 3v3M13 3h-3" stroke="#e8e8e8" stroke-width="1.300"/>`);
 const ham=S(16,13,`<path d="M0 1h16M0 6.500h16M0 12h16" stroke="#e8e8e8" stroke-width="2"/>`);
 return `<style>:host{display:flex;flex:none;height:32px;align-items:flex-start;font-size:11.300px;color:#e6e8ea}
 .tabs{display:flex;height:18px;flex:none;padding-left:25px}
 .m{width:39px;text-align:center;line-height:17px;color:#a4acb6;background:#272e39;border-left:1px solid #3a424e;border-right:1px solid #3a424e;box-sizing:content-box;margin-right:8px;margin-left:-1px}
 .l{width:63px;text-align:center;line-height:17px;background:#3b4453;color:#f0f2f4;font-weight:700;font-size:11px;border-radius:0 0 10px 8px;flex:none}
 .p{margin-left:7px;width:21px;background:#2d3440;border-radius:0 0 8px 6px;display:flex;align-items:center;justify-content:center;flex:none}
 .r{display:flex;margin-left:auto;margin-right:8px;margin-top:2px;height:24px}
 .gr{display:flex;height:24px;background:#3b4453;flex:none;align-items:center}
 .bt{height:24px;display:flex;align-items:center;justify-content:center;flex:none}
 .on{background:#5b8dc0}
 .pp{font:600 11.300px/24px ${FONT};color:#eceef0;width:100%;text-align:center}</style>
 <div class="tabs"><div class="m">Model</div><div class="l">Layout1</div><div class="p">${S(9,9,`<path d="M4.500 0v9M0 4.500h9" stroke="#aeb4bc" stroke-width="1.600"/>`)}</div></div>
 <div class="r">
  ${grp(0,40,`<div class="pp">PAPER</div>`)}
  ${grp(3,168,bt(25,ortho)+bt(22,polar,1)+dd(18)+bt(20,os)+dd(21)+bt(22,ang,1)+`<div style="width:2px"></div>`+bt(22,sqr,1)+dd(16))}
  ${grp(4,72,bt(24,sel)+bt(24,an(`<circle cx="15" cy="3.500" r="2.500" fill="none" stroke="#d9d9d9"/>`))+bt(24,an(`<path d="M12 4h6M15 1v6" stroke="#d9d9d9" stroke-width="1.500"/>`)))}
  ${grp(3,40,bt(24,gear)+dd(16))}
  ${grp(1,24,bt(24,plus))}
  ${grp(3,24,bt(24,shapes))}
  ${grp(3,49,bt(23,cloud)+bt(23,link))}
  ${grp(3,44,bt(24,full)+bt(20,ham))}
 </div>`}});
</script>
</body></html>
